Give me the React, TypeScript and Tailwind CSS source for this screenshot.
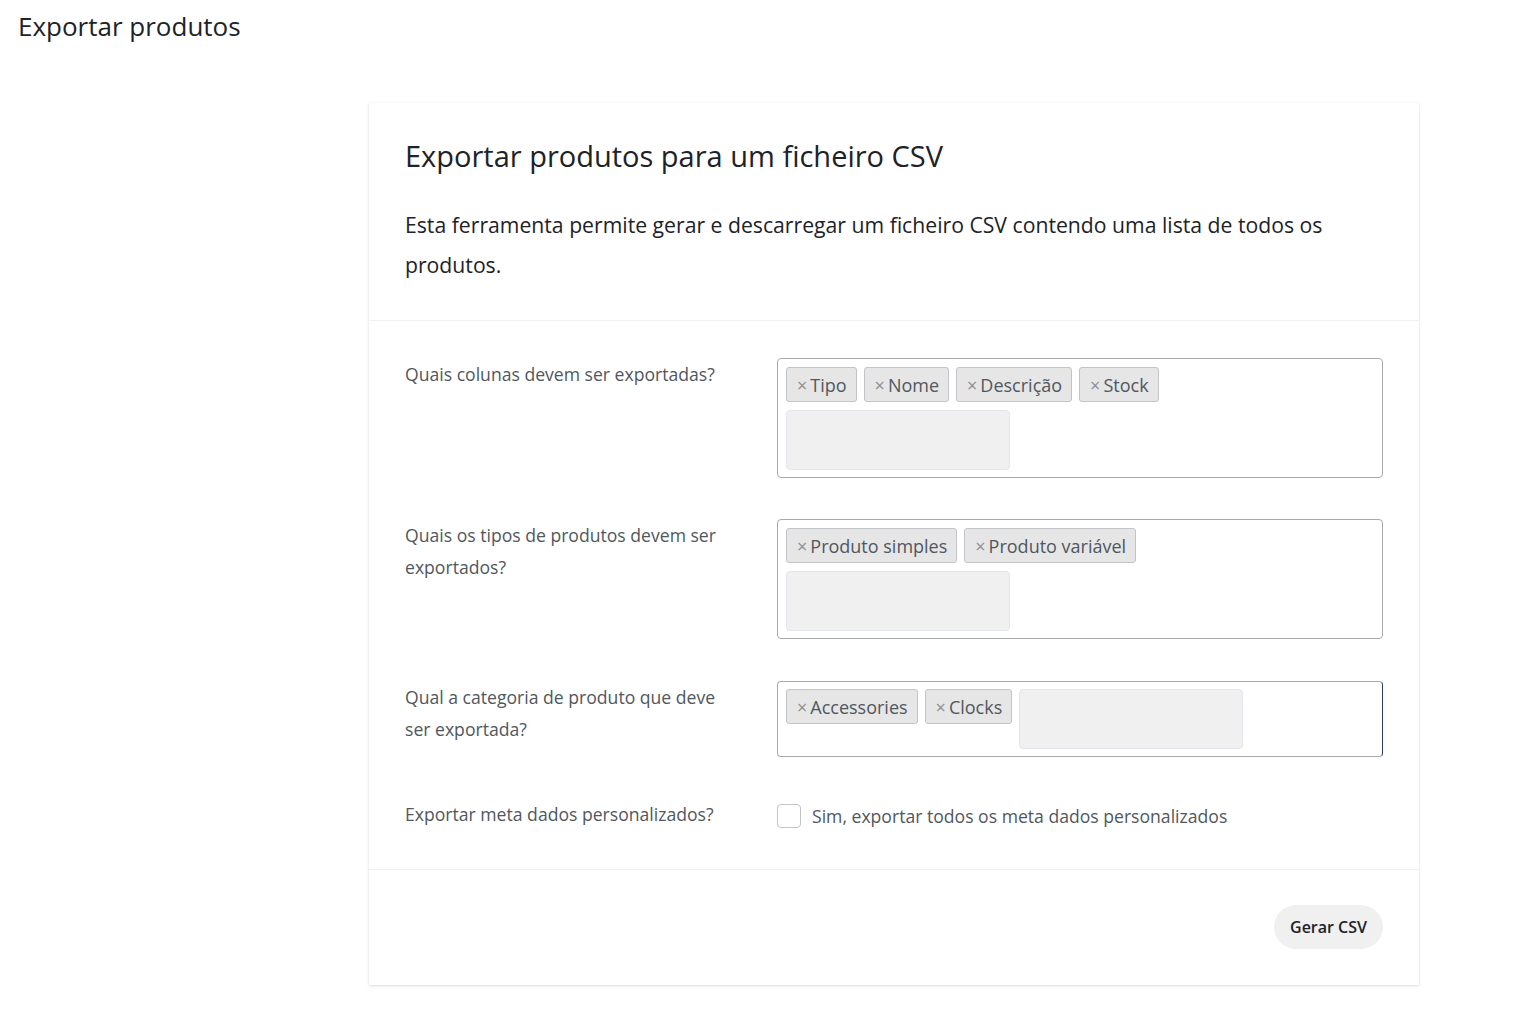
import React from "react";

const font = { fontFamily: '"Open Sans", "Noto Sans", sans-serif' };

function Tag({ label }: { label: string }) {
  return (
    <span className="inline-flex h-[35px] items-center rounded-[3px] border border-[#c3c4c7] bg-[#e6e6e6] pl-[10px] pr-[9px] text-[18px] leading-none text-[#50575e]">
      <span className="mr-[3px] text-[18px] leading-none text-[#8c8f94]">×</span>
      {label}
    </span>
  );
}

function EmptyInput() {
  return <span className="block h-[60px] w-[224px] rounded-[4px] border border-[#e4e4f0] bg-[#f0f0f1]" />;
}

function Row({ label, children, className = "" }: { label: React.ReactNode; children: React.ReactNode; className?: string }) {
  return (
    <div className={"flex " + className}>
      <div className="w-[372px] pr-[36px] text-[17.6px] leading-[32px] text-[#50575e]">{label}</div>
      <div className="w-[606px]">{children}</div>
    </div>
  );
}

export default function App() {
  return (
    <div className="min-h-[1030px] bg-white text-[#1d2327]" style={font}>
      <h1 className="pl-[18px] pt-[8px] text-[26px] leading-[36px] font-medium text-[#1d2327]">Exportar produtos</h1>
      <div className="ml-[369px] mt-[59px] w-[1050px] bg-white shadow-[0_1px_3px_rgba(0,0,0,0.13),0_0_1px_rgba(0,0,0,0.08)]">
        <div className="border-b border-[#f0f0f1] px-[36px] pb-[35px] pt-[35px]">
          <h2 className="text-[29px] leading-[36px] font-medium text-[#1d2327]">Exportar produtos para um ficheiro CSV</h2>
          <p className="mt-[31px] text-[21.2px] leading-[40px] text-[#1d2327]">
            Esta ferramenta permite gerar e descarregar um ficheiro CSV contendo uma lista de todos os produtos.
          </p>
        </div>
        <div className="border-b border-[#f0f0f1] px-[36px] pb-[39px] pt-[37px]">
          <Row label="Quais colunas devem ser exportadas?" className="mb-[41px]">
            <div className="flex h-[120px] flex-wrap content-start gap-x-[7px] gap-y-[8px] rounded-[4px] border border-[#a7aaad] p-[8px]">
              <Tag label="Tipo" />
              <Tag label="Nome" />
              <Tag label="Descrição" />
              <Tag label="Stock" />
              <div className="w-full">
                <EmptyInput />
              </div>
            </div>
          </Row>
          <Row label="Quais os tipos de produtos devem ser exportados?" className="mb-[42px]">
            <div className="flex h-[120px] flex-wrap content-start gap-x-[7px] gap-y-[8px] rounded-[4px] border border-[#a7aaad] p-[8px]">
              <Tag label="Produto simples" />
              <Tag label="Produto variável" />
              <div className="w-full">
                <EmptyInput />
              </div>
            </div>
          </Row>
          <Row label="Qual a categoria de produto que deve ser exportada?" className="mb-[41px]">
            <div className="flex h-[76px] items-start gap-x-[7px] rounded-[4px] border border-[#a7aaad] border-r-[#2c3e69] p-[7px] pl-[8px]">
              <Tag label="Accessories" />
              <Tag label="Clocks" />
              <EmptyInput />
            </div>
          </Row>
          <Row label="Exportar meta dados personalizados?">
            <label className="flex h-[32px] items-center pt-[4px] text-[17.6px] text-[#50575e]">
              <span className="mr-[11px] block h-[24px] w-[24px] rounded-[4px] border border-[#c3c4c7] bg-white" />
              Sim, exportar todos os meta dados personalizados
            </label>
          </Row>
        </div>
        <div className="flex justify-end px-[36px] pb-[36px] pt-[35px]">
          <button className="h-[44px] rounded-full bg-[#f0f0f1] px-[16px] text-[16px] font-semibold text-[#1d2327]">Gerar CSV</button>
        </div>
      </div>
    </div>
  );
}
